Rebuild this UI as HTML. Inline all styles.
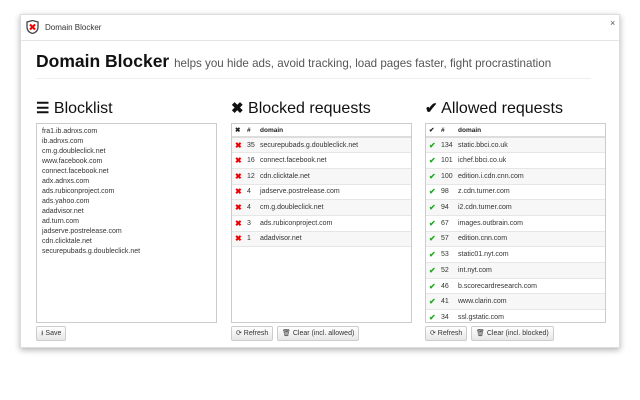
<!DOCTYPE html>
<html><head><style>
*{box-sizing:border-box;margin:0;padding:0}
body{width:640px;height:400px;background:#fff;font-family:"Liberation Sans",sans-serif;position:relative;overflow:hidden}
.win{position:absolute;left:20px;top:14px;width:600px;height:334px;background:#fff;border:1px solid #ddd;box-shadow:0 2px 6px rgba(0,0,0,.3)}
.tb{position:absolute;left:0;top:0;width:100%;height:26px;border-bottom:1px solid #e4e4e4;font-size:8px;color:#333}
.abs{position:absolute}
h1{position:absolute;left:15px;top:36px;font-size:17.5px;font-weight:bold;color:#111;white-space:nowrap}
h1 span{font-size:11.6px;font-weight:normal;color:#555}
.hr{position:absolute;left:15px;top:63px;width:555px;border-top:1px solid #eee}
h2{position:absolute;top:84px;font-size:16px;font-weight:normal;color:#111;white-space:nowrap}
h2 b{font-size:15px}
.box{position:absolute;top:108px;width:181px;height:200px;border:1px solid #ccc;background:#fff;overflow:hidden}
.ta{font-size:7px;line-height:10px;color:#333;padding:3px 5px}
table{border-collapse:collapse;width:100%;font-size:7px;color:#333}
td{height:15.7px;border-bottom:1px solid #e6e6e6;padding:0 0 0 3px;white-space:nowrap}
tr:nth-child(even) td{background:#f7f7f7}
th{height:13px;text-align:left;font-weight:bold;border-bottom:2px solid #ddd;padding-left:3px;font-size:6.5px;color:#222}
.x{color:#e00;font-weight:bold;font-size:8px}
.c{color:#2a2;font-weight:bold;font-size:8px}
.btn{position:absolute;top:311px;height:15px;border:1px solid #ccc;border-radius:2px;background:linear-gradient(#fff,#e6e6e6);font-size:7px;color:#333;line-height:13px;padding:0 4px;white-space:nowrap}
</style></head><body>
<div class="win">
<div class="tb">
<svg class="abs" style="left:5px;top:5px" width="13" height="14" viewBox="0 0 13 14"><path d="M1 2 L6.5 0.5 L12 2 L12 7 Q12 12 6.5 13.5 Q1 12 1 7Z" fill="#fff" stroke="#444" stroke-width="1.3"/><path d="M4 4.5 L9 9.5 M9 4.5 L4 9.5" stroke="#e00" stroke-width="2"/></svg>
<span class="abs" style="left:24px;top:8px">Domain Blocker</span>
<span class="abs" style="left:589px;top:3px;font-size:9px;color:#555">×</span>
</div>
<h1>Domain Blocker <span>helps you hide ads, avoid tracking, load pages faster, fight procrastination</span></h1>
<div class="hr"></div>
<h2 style="left:15px"><b>☰</b> Blocklist</h2>
<h2 style="left:210px"><b>✖</b> Blocked requests</h2>
<h2 style="left:404px"><b>✔</b> Allowed requests</h2>
<div class="box" style="left:15px"><div class="ta">fra1.ib.adnxs.com<br>ib.adnxs.com<br>cm.g.doubleclick.net<br>www.facebook.com<br>connect.facebook.net<br>adx.adnxs.com<br>ads.rubiconproject.com<br>ads.yahoo.com<br>adadvisor.net<br>ad.turn.com<br>jadserve.postrelease.com<br>cdn.clicktale.net<br>securepubads.g.doubleclick.net</div></div>
<div class="box" style="left:210px"><table>
<tr><th style="width:12px">✖</th><th style="width:13px">#</th><th>domain</th></tr>
<tr><td class="x">✖</td><td>35</td><td>securepubads.g.doubleclick.net</td></tr>
<tr><td class="x">✖</td><td>16</td><td>connect.facebook.net</td></tr>
<tr><td class="x">✖</td><td>12</td><td>cdn.clicktale.net</td></tr>
<tr><td class="x">✖</td><td>4</td><td>jadserve.postrelease.com</td></tr>
<tr><td class="x">✖</td><td>4</td><td>cm.g.doubleclick.net</td></tr>
<tr><td class="x">✖</td><td>3</td><td>ads.rubiconproject.com</td></tr>
<tr><td class="x">✖</td><td>1</td><td>adadvisor.net</td></tr>
</table></div>
<div class="box" style="left:404px"><table>
<tr><th style="width:12px">✔</th><th style="width:17px">#</th><th>domain</th></tr>
<tr><td class="c">✔</td><td>134</td><td>static.bbci.co.uk</td></tr>
<tr><td class="c">✔</td><td>101</td><td>ichef.bbci.co.uk</td></tr>
<tr><td class="c">✔</td><td>100</td><td>edition.i.cdn.cnn.com</td></tr>
<tr><td class="c">✔</td><td>98</td><td>z.cdn.turner.com</td></tr>
<tr><td class="c">✔</td><td>94</td><td>i2.cdn.turner.com</td></tr>
<tr><td class="c">✔</td><td>67</td><td>images.outbrain.com</td></tr>
<tr><td class="c">✔</td><td>57</td><td>edition.cnn.com</td></tr>
<tr><td class="c">✔</td><td>53</td><td>static01.nyt.com</td></tr>
<tr><td class="c">✔</td><td>52</td><td>int.nyt.com</td></tr>
<tr><td class="c">✔</td><td>46</td><td>b.scorecardresearch.com</td></tr>
<tr><td class="c">✔</td><td>41</td><td>www.clarin.com</td></tr>
<tr><td class="c">✔</td><td>34</td><td>ssl.gstatic.com</td></tr>
</table></div>
<div class="btn" style="left:15px">⭳ Save</div>
<div class="btn" style="left:210px">⟳ Refresh</div>
<div class="btn" style="left:256px">🗑 Clear (incl. allowed)</div>
<div class="btn" style="left:404px">⟳ Refresh</div>
<div class="btn" style="left:450px">🗑 Clear (incl. blocked)</div>
</div>
</body></html>
